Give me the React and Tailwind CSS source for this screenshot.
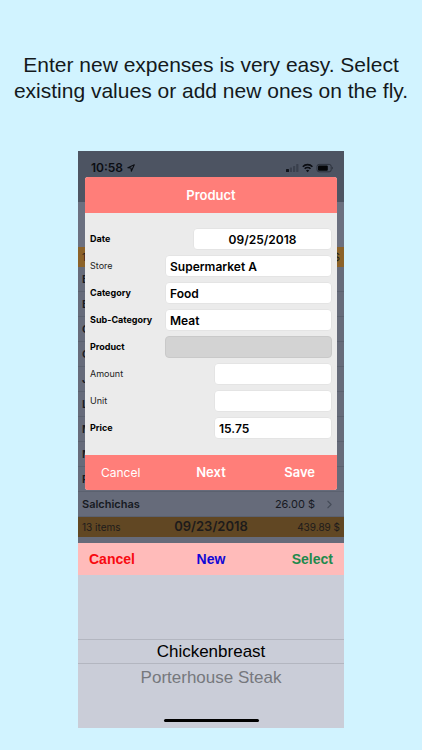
import React from "react";
import { ChevronRight } from "lucide-react";

const expenses = [
  { id: 1, name: "B" },
  { id: 2, name: "B" },
  { id: 3, name: "C" },
  { id: 4, name: "C" },
  { id: 5, name: "J" },
  { id: 6, name: "L" },
  { id: 7, name: "M" },
  { id: 8, name: "M" },
  { id: 9, name: "P" },
  { id: 10, name: "Salchichas", price: "26.00 $" },
];

const fields = [
  { id: "date", label: "Date", value: "09/25/2018", bold: true, box: "w-[139px] text-center bg-white border-[#e4e4e4]" },
  { id: "store", label: "Store", value: "Supermarket A", box: "w-[167px] bg-white border-[#e4e4e4]" },
  { id: "category", label: "Category", value: "Food", bold: true, box: "w-[167px] bg-white border-[#e4e4e4]" },
  { id: "sub-category", label: "Sub-Category", value: "Meat", bold: true, box: "w-[167px] bg-white border-[#e4e4e4]" },
  { id: "product", label: "Product", value: "", bold: true, box: "w-[167px] bg-[#d3d3d3] border-[#c9c9c9]" },
  { id: "amount", label: "Amount", value: "", box: "w-[118px] bg-white border-[#e4e4e4]" },
  { id: "unit", label: "Unit", value: "", box: "w-[118px] bg-white border-[#e4e4e4]" },
  { id: "price", label: "Price", value: "15.75", bold: true, box: "w-[118px] bg-white border-[#e4e4e4]" },
];

function StatusIcons() {
  return (
    <svg width="48" height="10" viewBox="0 0 48 10" aria-hidden="true">
      <rect x="0" y="6" width="3" height="3" rx="0.6" fill="#10131a" />
      <rect x="3.8" y="4.5" width="2.2" height="4.5" rx="0.6" fill="#3a404d" />
      <rect x="7" y="3" width="2.2" height="6" rx="0.6" fill="#3a404d" />
      <rect x="10.2" y="1" width="2.2" height="8" rx="0.6" fill="#3a404d" />
      <g fill="none" stroke="#0b0d12" strokeWidth="1.6">
        <path d="M16.8 3.7a6.6 6.6 0 0 1 9.6 0" />
        <path d="M18.7 5.8a4 4 0 0 1 5.8 0" />
      </g>
      <path d="M21.6 9.2 20 7.4a2.3 2.3 0 0 1 3.2 0z" fill="#0b0d12" />
      <rect x="31" y="1.4" width="14.2" height="7.4" rx="2" fill="none" stroke="#252a34" strokeWidth="0.8" />
      <rect x="32" y="2.4" width="9.8" height="5.4" rx="1" fill="#050608" />
      <path d="M46.2 3.8c1 .3 1 2.3 0 2.6z" fill="#252a34" />
    </svg>
  );
}

function StatusBar() {
  return (
    <div className="flex h-[51px] items-start justify-between bg-[#4d5462] pt-[10px] pr-[10px] pl-[13px]">
      <div className="flex items-center gap-1 text-[12px] leading-[14px] font-semibold text-[#0b0d12]">
        10:58
        <svg width="8" height="8" viewBox="0 0 7 7" aria-hidden="true">
          <path d="M.7 3.2 6.4.6 3.8 6.3 3.5 3.5z" fill="none" stroke="#0b0d12" strokeWidth="0.9" strokeLinejoin="round" />
        </svg>
      </div>
      <div className="pt-[2px]">
        <StatusIcons />
      </div>
    </div>
  );
}

function DayBar({ items, date, total, tone }) {
  return (
    <div className={`grid h-5 grid-cols-3 items-center px-1 text-[10px] text-[#1d1b1b] ${tone}`}>
      <span>{items}</span>
      <span className="text-center text-[13px] font-semibold">{date}</span>
      <span className="text-right">{total}</span>
    </div>
  );
}

function ExpenseList() {
  return (
    <ul>
      {expenses.map((e) => (
        <li key={e.id} className="flex h-[25px] items-center border-b border-[#5b616f] pr-2 pl-1 text-[11px] text-[#171a22]">
          <span className="grow font-semibold">{e.name}</span>
          <span>{e.price}</span>
          <ChevronRight className="ml-2 size-[13px] text-[#454b58]" strokeWidth={2} />
        </li>
      ))}
    </ul>
  );
}

function ProductDialog() {
  return (
    <form
      className="absolute inset-x-[7px] top-[26px] overflow-hidden rounded-[3px] bg-[#ebebeb]"
      onSubmit={(ev) => ev.preventDefault()}
    >
      <h2 className="h-9 bg-[#ff7e79] text-center text-[13px] leading-9 font-semibold text-white">Product</h2>
      <div className="flex flex-col gap-[5px] px-[5px] pt-[15px] pb-[16px]">
        {fields.map((f) => (
          <div key={f.id} className="flex h-[22px] items-center justify-between">
            <label
              htmlFor={f.id}
              className={f.bold ? "text-[9px] font-bold text-black" : "text-[9px] text-[#222222]"}
            >
              {f.label}
            </label>
            <input
              id={f.id}
              defaultValue={f.value}
              className={`h-full rounded-[4px] border px-1 text-[12px] font-semibold text-black ${f.box}`}
            />
          </div>
        ))}
      </div>
      <div className="grid h-[35px] grid-cols-3 items-center bg-[#ff7e79] text-[13px] text-white">
        <button type="button" className="pl-4 text-left text-[12px]">Cancel</button>
        <button type="button" className="font-semibold">Next</button>
        <button type="submit" className="pr-[22px] text-right font-semibold">Save</button>
      </div>
    </form>
  );
}

function Picker() {
  return (
    <section className="font-['Liberation_Sans',Arial,sans-serif]">
      <div className="grid h-8 grid-cols-3 items-center bg-[#ffbbba] px-[11px] text-[14px] font-bold">
        <button type="button" className="text-left text-[#f80a10]">Cancel</button>
        <button type="button" className="text-[#1108d6]">New</button>
        <button type="button" className="text-right text-[#1f8a4d]">Select</button>
      </div>
      <div className="flex flex-col bg-[#cacdd8] pt-16 pb-[6px] text-center text-[17px]">
        <div className="h-[25px] border-y border-[#b3b6c0] leading-[24px] text-black">Chickenbreast</div>
        <div className="h-[25px] leading-[27px] text-[#76787d]">Porterhouse Steak</div>
        <div className="mx-auto mt-[30px] h-[3px] w-[95px] rounded-full bg-black" />
      </div>
    </section>
  );
}

export default function App() {
  return (
    <main className="min-h-screen bg-[#d1f3ff] pt-[52px] pb-[22px] font-['Inter',sans-serif]">
      <h1 className="px-2 text-center font-['Liberation_Sans',Arial,sans-serif] text-[21px] leading-[26px] text-[#14191c]">
        Enter new expenses is very easy. Select
        <br />
        existing values or add new ones on the fly.
      </h1>
      <div className="relative mx-[78px] mt-[47px] overflow-hidden bg-[#666b7a]">
        <StatusBar />
        <div className="h-[45px] bg-[#6b7080]" />
        <DayBar items="1" total="$" tone="bg-[#8c6229]" />
        <ExpenseList />
        <DayBar items="13 items" date="09/23/2018" total="439.89 $" tone="bg-[#614723]" />
        <div className="h-[6px]" />
        <ProductDialog />
        <Picker />
      </div>
    </main>
  );
}
